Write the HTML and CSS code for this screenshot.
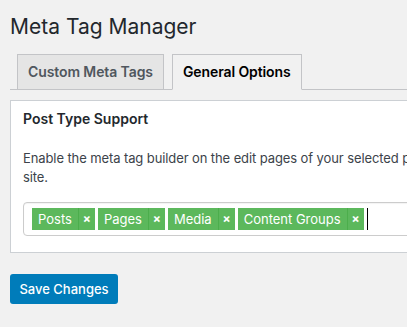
FILE: index.html
```html
<!DOCTYPE html>
<html lang="en">
<head>
  <meta charset="UTF-8">
  <meta name="viewport" content="width=device-width, initial-scale=1.0">
  <title>Meta Tag Manager</title>
  <link rel="stylesheet" href="styles.css">
</head>
<body>
  <div class="wrap">
    <h1 class="page-title">Meta Tag Manager</h1>
    <nav class="nav-tabs">
      <a class="nav-tab">Custom Meta Tags</a>
      <a class="nav-tab active">General Options</a>
    </nav>
    <div class="postbox">
      <h2 class="postbox-title">Post Type Support</h2>
      <p class="description">Enable the meta tag builder on the edit pages of your selected post types on your site.</p>
      <div class="tag-input">
        <span class="tag"><span class="tag-label">Posts</span><span class="tag-remove">×</span></span>
        <span class="tag"><span class="tag-label">Pages</span><span class="tag-remove">×</span></span>
        <span class="tag"><span class="tag-label">Media</span><span class="tag-remove">×</span></span>
        <span class="tag"><span class="tag-label">Content Groups</span><span class="tag-remove">×</span></span>
        <span class="caret"></span>
      </div>
    </div>
    <button class="button-primary">Save Changes</button>
  </div>
</body>
</html>
```

FILE: styles.css
```css
html, body {
  margin: 0;
  overflow: hidden;
}
body {
  background: #f1f1f1;
  color: #23282d;
  font-family: Inter, "Liberation Sans", sans-serif;
}
.wrap {
  width: 600px;
  padding-left: 10px;
}
.page-title {
  margin: 0;
  padding-top: 16px;
  font-size: 21px;
  font-weight: 400;
  line-height: 22px;
}
.nav-tabs {
  display: flex;
  gap: 8px;
  margin-top: 16px;
  padding-left: 7px;
  border-bottom: 1px solid #c3c4c7;
}
.nav-tab {
  padding: 5px 10px;
  margin-bottom: -1px;
  font-size: 14px;
  font-weight: 600;
  line-height: 24px;
  letter-spacing: -0.1px;
  color: #50575e;
  background: #e5e5e5;
  border: 1px solid #c3c4c7;
}
.nav-tab.active {
  color: #000;
  background: #f1f1f1;
  border-bottom-color: #f1f1f1;
}
.postbox {
  margin-top: 10px;
  padding: 0 12px 16px;
  background: #fff;
  border: 1px solid #ccd0d4;
}
.postbox-title {
  margin: 8px 0 0;
  font-size: 14px;
  font-weight: 600;
  line-height: 20px;
}
.description {
  margin: 20px 0 0;
  width: 508px;
  font-size: 13px;
  line-height: 19px;
  letter-spacing: -0.1px;
  color: #3c434a;
}
.tag-input {
  display: flex;
  align-items: center;
  gap: 3px;
  margin-top: 15px;
  padding: 5px 8px;
  border: 1px solid #ccc;
  border-radius: 4px;
  box-shadow: inset 0 1px 1px rgba(0, 0, 0, 0.05);
}
.tag {
  display: flex;
  height: 22px;
  background: #5cb85c;
  color: #fff;
  font-size: 13px;
  line-height: 22px;
}
.tag-label {
  padding: 0 6px;
}
.tag-remove {
  width: 16px;
  text-align: center;
  font-size: 12px;
  font-weight: 700;
  border-left: 1px solid #4cae4c;
}
.caret {
  width: 1px;
  height: 22px;
  background: #000;
}
.button-primary {
  margin-top: 21px;
  width: 108px;
  height: 30px;
  padding: 0;
  background: #007cba;
  color: #fff;
  border: none;
  border-radius: 3px;
  font-family: Inter, "Liberation Sans", sans-serif;
  font-size: 13px;
  font-weight: 500;
}
```
